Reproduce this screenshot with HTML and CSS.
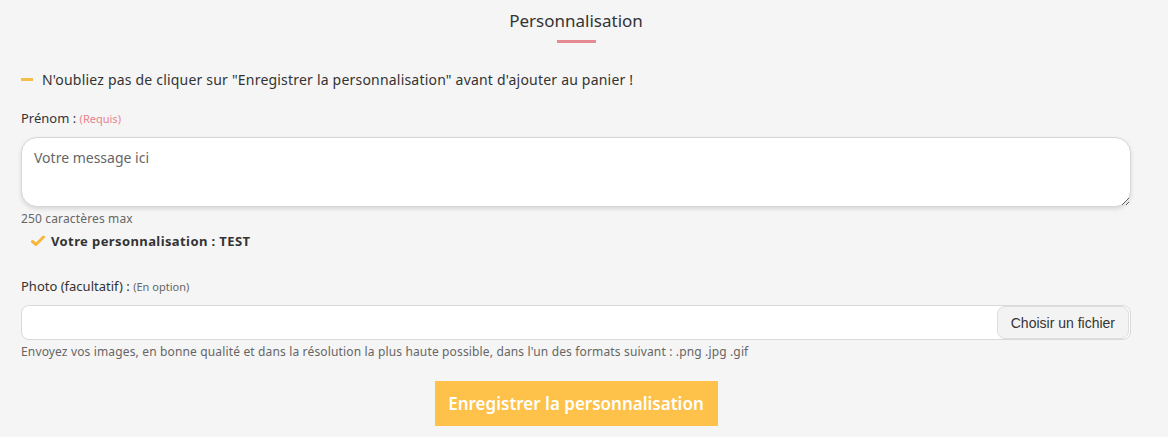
FILE: index.html
```html
<!DOCTYPE html>
<html lang="fr">
<head>
    <meta charset="UTF-8">
    <meta name="viewport" content="width=device-width, initial-scale=1.0">
    <title>Personnalisation</title>
    <link rel="stylesheet" href="styles.css">
</head>
<body>
    <form class="perso-form" id="persoForm">
        <h2 class="perso-title">Personnalisation</h2>

        <p class="notice">N'oubliez pas de cliquer sur "Enregistrer la personnalisation" avant d'ajouter au panier !</p>

        <label for="prenom" class="field-label">Prénom : <span class="required">(Requis)</span></label>
        <textarea id="prenom" name="prenom" class="message" maxlength="250" placeholder="Votre message ici"></textarea>
        <div class="hint">250 caractères max</div>
        <div class="saved">
            <svg class="check" width="14" height="12" viewBox="0 0 14 12"><path d="M1.5 6.5 L5 9.5 L12.5 2" fill="none" stroke="#f5b83d" stroke-width="3" stroke-linecap="round" stroke-linejoin="round"/></svg>
            <strong>Votre personnalisation : TEST</strong>
        </div>

        <label class="field-label photo-label">Photo (facultatif) : <span class="optional">(En option)</span></label>
        <div class="file-field">
            <span class="file-name"></span>
            <button type="button" class="file-button">Choisir un fichier</button>
        </div>
        <div class="hint">Envoyez vos images, en bonne qualité et dans la résolution la plus haute possible, dans l'un des formats suivant : .png .jpg .gif</div>

        <div class="actions">
            <button type="submit" class="save-button">Enregistrer la personnalisation</button>
        </div>
    </form>
</body>
</html>
```

FILE: styles.css
```css
body {
    font-family: "Noto Sans", sans-serif;
    background-color: #f5f5f5;
    color: #333;
    margin: 0;
    padding: 0;
}

.perso-form {
    padding: 0 37px 0 21px;
}

.perso-title {
    margin: 0;
    padding-top: 9px;
    font-size: 17px;
    font-weight: normal;
    text-align: center;
    color: #333;
}
.perso-title::after {
    content: "";
    display: block;
    width: 39px;
    height: 3px;
    background-color: #e58a93;
    margin: 8px auto 0;
}

.notice {
    margin: 27px 0 0;
    font-size: 14px;
    letter-spacing: 0.2px;
    display: flex;
    align-items: center;
}
.notice::before {
    content: "";
    display: inline-block;
    width: 12px;
    height: 3px;
    background-color: #f5be48;
    margin-right: 9px;
}

.field-label {
    display: block;
    margin-top: 20px;
    font-size: 13px;
}
.required {
    color: #e8838d;
    font-size: 11px;
}
.optional {
    color: #666;
    font-size: 11px;
}

.message {
    display: block;
    box-sizing: border-box;
    width: 100%;
    height: 70px;
    margin-top: 10px;
    padding: 10px 12px;
    border: 1px solid #d6d6d6;
    border-radius: 16px;
    background-color: white;
    box-shadow: 0 2px 4px rgba(0, 0, 0, 0.12);
    font-family: "Noto Sans", sans-serif;
    font-size: 14px;
    color: #333;
}
.message::placeholder {
    color: #666;
}

.hint {
    margin-top: 3px;
    font-size: 12px;
    letter-spacing: 0.15px;
    color: #666;
}

.saved {
    display: flex;
    align-items: center;
    margin: 5px 0 0 10px;
    font-size: 13px;
    letter-spacing: 0.4px;
    gap: 6px;
}

.photo-label {
    margin-top: 27px;
}

.file-field {
    display: flex;
    justify-content: flex-end;
    align-items: center;
    box-sizing: border-box;
    height: 35px;
    margin-top: 10px;
    padding-right: 1px;
    border: 1px solid #d9d9d9;
    border-radius: 8px;
    background-color: white;
}
.file-button {
    height: 33px;
    padding: 0 13px;
    border: 1px solid #ddd;
    border-radius: 8px;
    background-color: #f3f3f3;
    color: #333;
    font-family: "Liberation Sans", Arial, sans-serif;
    font-size: 14px;
    cursor: pointer;
}

.actions {
    display: flex;
    justify-content: center;
    margin-top: 21px;
}
.save-button {
    width: 283px;
    height: 45px;
    border: none;
    background-color: #fec14a;
    color: white;
    font-family: "Noto Sans", sans-serif;
    font-size: 17px;
    font-weight: 600;
    cursor: pointer;
}
.save-button:hover {
    background-color: #f5b431;
}
```
